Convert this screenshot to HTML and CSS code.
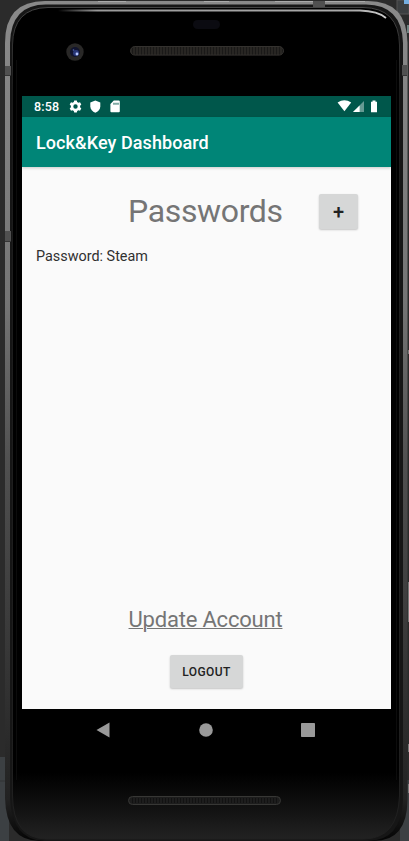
FILE: index.html
```html
<!DOCTYPE html>
<html lang="en">
<head>
<meta charset="utf-8">
<title>Lock&amp;Key Dashboard</title>
<link rel="stylesheet" href="styles.css">
</head>
<body>
<div class="stage">
<svg class="frame" width="409" height="841" viewBox="0 0 409 841" aria-hidden="true">
  <defs>
    <linearGradient id="metal" x1="0" y1="0" x2="0" y2="1">
      <stop offset="0" stop-color="#8a8a8a"/><stop offset=".1" stop-color="#858585"/><stop offset=".36" stop-color="#747474"/>
      <stop offset=".55" stop-color="#505050"/><stop offset=".75" stop-color="#3a3a3a"/><stop offset=".95" stop-color="#222"/><stop offset="1" stop-color="#050505"/>
    </linearGradient>
    <linearGradient id="inner" x1="0" y1="0" x2="0" y2="1">
      <stop offset="0" stop-color="#444"/><stop offset=".1" stop-color="#1c1c1c"/><stop offset="1" stop-color="#202020"/>
    </linearGradient>
    <linearGradient id="face" x1="0" y1="0" x2="0" y2="1">
      <stop offset="0" stop-color="#000"/><stop offset=".92" stop-color="#000"/><stop offset=".96" stop-color="#101010"/><stop offset="1" stop-color="#222"/>
    </linearGradient>
    <linearGradient id="shine" gradientUnits="userSpaceOnUse" x1="58" y1="0" x2="386" y2="0">
      <stop offset="0" stop-color="#aaa" stop-opacity="0"/><stop offset=".12" stop-color="#999"/><stop offset=".9" stop-color="#aaa"/><stop offset="1" stop-color="#ccc"/>
    </linearGradient>
    <pattern id="mesh" width="3" height="9" patternUnits="userSpaceOnUse"><rect width="3" height="9" fill="#282623"/><rect width="1" height="9" fill="#1a1918"/></pattern>
  </defs>
  <rect width="409" height="841" fill="#2b2b2b"/>
  <path d="M0 757h9v84H0zM400 780h9v61h-9z" fill="#3c4043"/>
  <path d="M0 781h8" stroke="#303335"/>
  <path d="M397 0h12v14h-9q-3 0-3-3z" fill="#3c3f41" stroke="#555"/>
  <path d="M404 0h5v4h-5z" fill="#75aee0"/>
  <path d="M408 25v8" stroke="#b8dcda"/>
  <path d="M45 1H368Q407 1 407.500 43V800Q407 841 374 841H40Q6 841 5 798V43Q5 1 45 1Z" fill="url(#metal)"/>
  <path d="M46 4.500H366Q402 5 403 43V800Q401 841 368 841H44Q12 840 10 798V43Q11 4.500 46 4.500Z" fill="#161616"/>
  <path d="M48 7.500H363Q399 8 399.500 45V796Q398 839 363 839H46Q13 838 12.500 796V45Q13 8 48 7.500Z" fill="url(#face)" stroke="url(#inner)"/>
  <path d="M16.500 60V780M396.500 60V780" stroke="#0c0c0c"/>
  <path d="M58 10.500H360Q378 11 386 18" fill="none" stroke="url(#shine)" stroke-width="1.800"/>
  <path d="M98 1.500h28M204 1.500h25M275 1.500h90" stroke="#aaa"/>
  <path d="M313 1h12v6h-12zM5 66h6v9H5zM402 65h5v10h-5zM5 231h6v10H5z" fill="#505050"/>
  <path d="M5 75.500h6M402 75.500h5M5 241.500h6" stroke="#353535"/>
  <path d="M408.500 350v4M408.500 582v40M408.500 744v8M408.500 784v9" stroke="#777"/>
  <rect x="193" y="20" width="27" height="9" rx="4.500" fill="#0b0b11"/>
  <circle cx="75" cy="52" r="8.700" fill="#292827"/><circle cx="75" cy="52" r="5" fill="#11142e"/><circle cx="76" cy="53" r="3" fill="#293778"/><circle cx="77" cy="54" r="1.400" fill="#b5c7ff"/><circle cx="73.500" cy="50" r=".8" fill="#5268b0"/>
  <rect x="130.500" y="46.500" width="153" height="8.600" rx="4.300" fill="url(#mesh)" stroke="#34322f"/>
  <rect x="128.500" y="796.500" width="152" height="8" rx="4" fill="#1d1d1d" stroke="#373735"/>
  <path d="M132 800.500h145" stroke="#121212" stroke-width="5" stroke-dasharray="1 2"/>
</svg>
<main class="screen">
  <div class="status">
    <span class="time">8:58</span>
    <svg class="left-icons" width="54" height="21" viewBox="0 0 54 21" fill="#fff">
      <path fill-rule="evenodd" d="M6.200 4.500h2.600l.4 1.600 1.200.7 1.600-.5 1.300 2.200-1.200 1.200v1.600l1.200 1.200-1.300 2.200-1.600-.5-1.200.7-.4 1.600H6.200l-.4-1.600-1.200-.7-1.600.5-1.300-2.200 1.200-1.200V9.700L1.700 8.500 3 6.300l1.600.5 1.200-.7zM7.500 8.300a2.200 2.200 0 1 0 0 4.400 2.200 2.200 0 0 0 0-4.400z"/>
      <path d="M27.300 4.600l5 2v3.600c0 3-2.200 5.500-5 6.500-2.800-1-5-3.500-5-6.500V6.600z"/>
      <path fill-rule="evenodd" d="M45.800 4.600h5q1 0 1 1v9.600q0 1-1 1h-7.400q-1 0-1-1V8zM45.500 6.800v2h1v-2zm2 0v2h1v-2zm2 0v2h1v-2z"/>
    </svg>
    <svg class="right-icons" width="42" height="21" viewBox="0 0 42 21" fill="#fff">
      <path d="M.6 6.600Q7.400 1.800 14.200 6.600L7.400 15.300z"/>
      <path d="M27 5v11H16z" opacity=".4"/><path d="M22.600 9.400V16H16z"/>
      <path d="M35.500 4.500h3v1.200h1.500v10.600h-6V5.700h1.500z"/>
    </svg>
  </div>
  <header class="appbar"><h1>Lock&amp;Key Dashboard</h1></header>
  <section class="content">
    <div class="heading"><h2>Passwords</h2><button class="btn add">+</button></div>
    <div class="entry">Password: Steam</div>
    <footer class="actions">
      <a class="update">Update Account</a>
      <button class="btn logout">LOGOUT</button>
    </footer>
  </section>
</main>
<nav class="nav">
  <svg width="14" height="16" viewBox="0 0 14 16"><path d="M.5 8L13.500.5v15z" fill="#999"/></svg>
  <svg width="14" height="14" viewBox="0 0 14 14"><circle cx="7" cy="7" r="6.800" fill="#999"/></svg>
  <svg width="14" height="14" viewBox="0 0 14 14"><rect width="14" height="14" rx=".7" fill="#999"/></svg>
</nav>
</div>
</body>
</html>
```
FILE: styles.css
```css
* { box-sizing: border-box; }
body { margin: 0; background: #2b2b2b; font-family: Roboto, "Liberation Sans", sans-serif; overflow: hidden; }
h1, h2 { margin: 0; }
.stage { position: relative; width: 409px; height: 841px; padding: 96px 18px 0 22px; }
.frame { position: absolute; inset: 0; }
.screen { position: relative; height: 613px; background: #fafafa; display: flex; flex-direction: column; }
.status { height: 21px; background: #00574b; color: #fff; display: flex; align-items: center; padding: 0 12px; }
.time { font-size: 12.500px; font-weight: 500; width: 34px; line-height: 21px; letter-spacing: .15px; }
.left-icons { display: block; }
.right-icons { display: block; margin-left: auto; }
.appbar { height: 50px; background: #008577; color: #fff; display: flex; align-items: center; padding: 2px 14px 0; box-shadow: 0 1px 3px rgba(0, 0, 0, .2); }
.appbar h1 { font-size: 18px; font-weight: 500; line-height: 24px; letter-spacing: .08px; white-space: nowrap; }
.content { flex: 1; display: flex; flex-direction: column; padding-top: 24px; }
.heading { display: flex; height: 40px; align-items: center; padding-left: 106px; }
.heading h2 { width: 191px; font-size: 32px; font-weight: 400; line-height: 40px; letter-spacing: -.35px; color: #757575; }
.btn { border: 0; border-radius: 2px; background: #d6d7d7; color: #212121; font-family: inherit; font-weight: 500; padding: 0; box-shadow: 0 1px 2px rgba(0, 0, 0, .22); }
.add { width: 39px; height: 35px; font-size: 20px; padding-top: 2px; }
.entry { padding: 16px 14px 0; font-size: 14.400px; line-height: 20px; color: #303030; }
.actions { margin-top: auto; padding: 0 2px 21px 0; display: flex; flex-direction: column; align-items: center; gap: 20px; }
.update { font-size: 22px; line-height: 30px; letter-spacing: -.2px; color: #757575; text-decoration: underline; text-decoration-thickness: 1px; }
.logout { width: 73px; height: 33px; font-size: 12px; letter-spacing: .4px; margin-left: 2px; }
.nav { position: relative; height: 42px; display: flex; align-items: center; justify-content: space-between; padding: 0 76px 0 74px; }
```
